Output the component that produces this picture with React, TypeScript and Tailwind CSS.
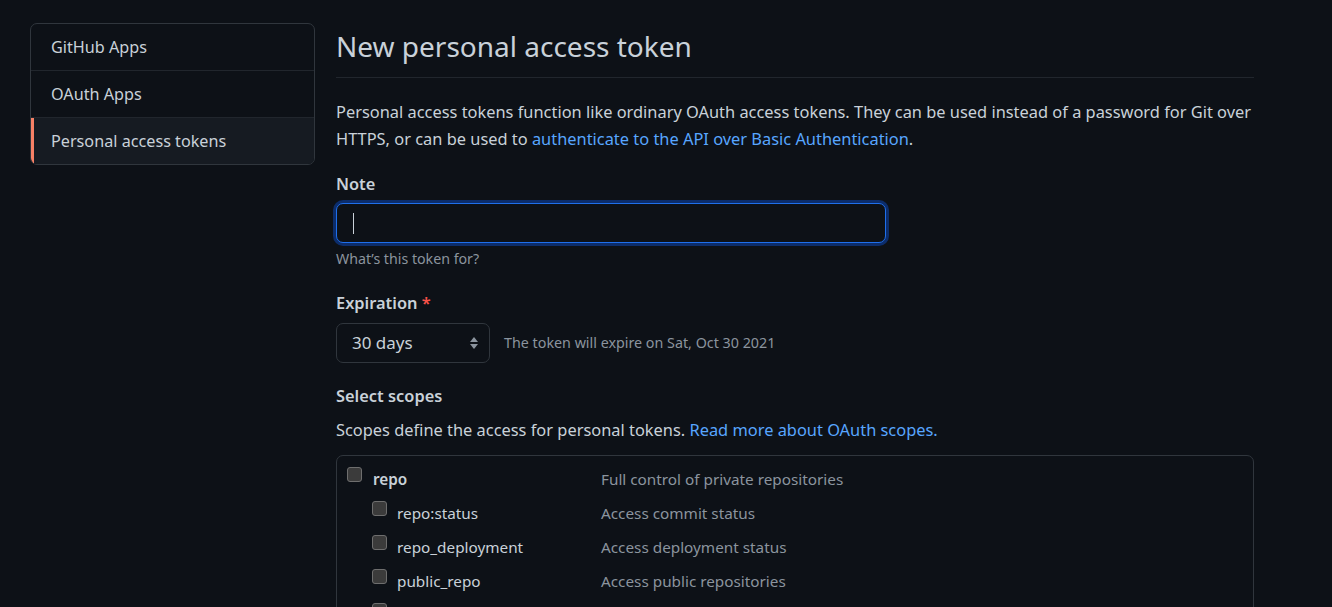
import React from "react";

const font = { fontFamily: '"Noto Sans", "Open Sans", sans-serif' };

function Checkbox() {
  return (
    <span className="inline-block w-[15px] h-[15px] rounded-[3px] bg-[#3b3b3b] border border-[#6e6e6e] shrink-0" />
  );
}

const scopes = [
  { name: "repo", desc: "Full control of private repositories", top: true },
  { name: "repo:status", desc: "Access commit status" },
  { name: "repo_deployment", desc: "Access deployment status" },
  { name: "public_repo", desc: "Access public repositories" },
  { name: "repo:invite", desc: "Access repository invitations" },
];

export default function App() {
  return (
    <div
      className="min-h-screen h-[607px] overflow-hidden bg-[#0d1117] text-[#c9d1d9] flex items-start pl-[30px] pt-[22px] gap-[21px]"
      style={font}
    >
      <nav className="mt-[1px] w-[285px] shrink-0 rounded-[7px] border border-[#30363d] overflow-hidden text-[16.2px]">
        <a className="flex items-center h-[47px] px-[20px] border-b border-[#21262d]">GitHub Apps</a>
        <a className="flex items-center h-[47px] px-[20px] border-b border-[#21262d]">OAuth Apps</a>
        <a className="flex items-center h-[46px] pl-[17px] pr-[20px] bg-[#161b22] border-l-[3px] border-[#f78166]">
          Personal access tokens
        </a>
      </nav>

      <main className="w-[918px] shrink-0">
        <div className="border-b border-[#21262d] pt-[4px] pb-[11px]">
          <h1 className="text-[28px] leading-[40px] font-normal text-[#c9d1d9]">New personal access token</h1>
        </div>

        <p className="mt-[20px] text-[16.4px] leading-[27px]">
          Personal access tokens function like ordinary OAuth access tokens. They can be used instead of a password for Git over
          HTTPS, or can be used to{" "}
          <a className="text-[#58a6ff]">authenticate to the API over Basic Authentication</a>.
        </p>

        <div className="mt-[20px]">
          <label className="block text-[16.4px] leading-[24px] font-semibold">Note</label>
          <div className="mt-[7px] w-[550px] h-[40px] rounded-[7px] border border-[#1f6feb] shadow-[0_0_0_3px_#0c2d6b] bg-[#0d1117] flex items-center pl-[16px]">
            <span className="block w-px h-[21px] bg-[#c9d1d9]" />
          </div>
          <p className="mt-[6px] text-[14.2px] leading-[20px] text-[#8b949e]">What’s this token for?</p>
        </div>

        <div className="mt-[22px]">
          <label className="block text-[16.4px] leading-[24px] font-semibold">
            Expiration <span className="text-[#f85149]">*</span>
          </label>
          <div className="mt-[8px] flex items-center gap-[14px]">
            <div className="w-[154px] h-[40px] rounded-[7px] border border-[#30363d] bg-[#0d1117] flex items-center justify-between pl-[15px] pr-[9px] text-[17px]">
              <span>30 days</span>
              <svg width="12" height="16" viewBox="0 0 12 16">
                <path d="M6 2 L10 7 H2 Z" fill="#8b949e" />
                <path d="M6 14 L10 9 H2 Z" fill="#8b949e" />
              </svg>
            </div>
            <span className="text-[14.3px] text-[#8b949e]">The token will expire on Sat, Oct 30 2021</span>
          </div>
        </div>

        <div className="mt-[21px]">
          <h3 className="text-[16.4px] leading-[24px] font-semibold">Select scopes</h3>
          <p className="mt-[10px] text-[16.4px] leading-[24px]">
            Scopes define the access for personal tokens.{" "}
            <a className="text-[#58a6ff]">Read more about OAuth scopes.</a>
          </p>
        </div>

        <div className="mt-[13px] rounded-[7px] border border-[#30363d] pt-[6px]">
          {scopes.map((s) => (
            <div key={s.name} className="flex items-center h-[34px] text-[15.3px]">
              <div className={`flex items-center w-[264px] ${s.top ? "pl-[10px] gap-[11px]" : "pl-[35px] gap-[10px]"}`}>
                <span className="-mt-[6px]">
                  <Checkbox />
                </span>
                <span className={s.top ? "font-semibold" : ""}>{s.name}</span>
              </div>
              <span className="text-[#8b949e]">{s.desc}</span>
            </div>
          ))}
        </div>
      </main>
    </div>
  );
}
